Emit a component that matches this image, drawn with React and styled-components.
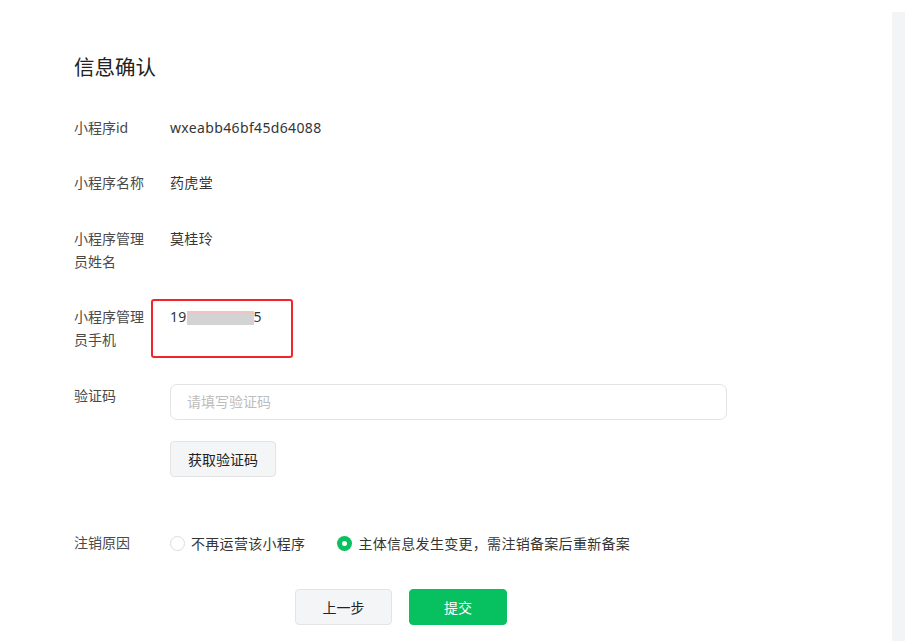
import React from "react";
import styled, { createGlobalStyle } from "styled-components";

const GlobalStyle = createGlobalStyle`
  html, body { margin: 0; padding: 0; background: #fff; }
  body {
    font-family: "Noto Sans", "Noto Sans CJK SC", sans-serif;
    -webkit-font-smoothing: antialiased;
  }
  * { box-sizing: border-box; }
`;

const Page = styled.div`
  display: flex;
  width: 905px;
  min-height: 641px;
  background: #fff;
`;

const Main = styled.main`
  flex: 1;
  padding: 53px 0 0 74px;
`;

const SideStrip = styled.aside`
  width: 13px;
  margin-top: 12px;
  background: #f3f4f6;
`;

const Title = styled.h2`
  margin: 0 0 34.5px;
  font-size: 20.5px;
  line-height: 28px;
  font-weight: 400;
  color: #222;
`;

const Form = styled.div`
  width: 653px;
  display: flex;
  flex-direction: column;
  gap: 32.5px;
`;

const Row = styled.div`
  display: grid;
  grid-template-columns: 72px 1fr;
  column-gap: 24px;
  align-items: start;
  margin-top: ${(p) => p.$extraTop || 0}px;
`;

const Label = styled.div`
  font-size: 14px;
  line-height: 23px;
  color: #4a4a4a;
`;

const Value = styled.div`
  position: relative;
  font-size: 14px;
  line-height: 23px;
  letter-spacing: 0.35px;
  color: #353535;
`;

const Masked = styled.span`
  display: inline-block;
  color: transparent;
  background: linear-gradient(#f0c4c4 0 3px, #d3d3d3 3px 100%);
  line-height: 14px;
  vertical-align: -1px;
  filter: blur(0.6px);
`;

const Highlight = styled.div`
  position: absolute;
  left: -19px;
  top: -6px;
  width: 142px;
  height: 59px;
  border: 2px solid #f1262c;
  border-radius: 3px;
  pointer-events: none;
`;

const Field = styled.div`
  display: flex;
  flex-direction: column;
  align-items: flex-start;
  gap: 21px;
`;

const Input = styled.input`
  width: 557px;
  height: 36px;
  padding: 0 16px;
  border: 1px solid #e3e3e3;
  border-radius: 7px;
  font-family: inherit;
  font-size: 14px;
  color: #353535;
  outline: none;
  &::placeholder { color: #bdbdbd; }
`;

const Button = styled.button`
  height: 36px;
  padding: 0 ${(p) => p.$pad || 16}px;
  width: ${(p) => (p.$w ? `${p.$w}px` : "auto")};
  border-radius: 4px;
  font-family: inherit;
  font-size: 14px;
  cursor: pointer;
  border: 1px solid ${(p) => (p.$primary ? "#07c160" : "#e4e4e4")};
  background: ${(p) => (p.$primary ? "#07c160" : "#f4f5f7")};
  color: ${(p) => (p.$primary ? "#fff" : "#222")};
`;

const Radios = styled.div`
  display: flex;
  align-items: center;
  gap: 32px;
  padding-top: 1px;
`;

const RadioItem = styled.label`
  display: flex;
  align-items: center;
  gap: 6px;
  font-size: 14px;
  line-height: 23px;
  letter-spacing: 0.3px;
  color: #353535;
`;

const RadioDot = styled.span`
  width: 15px;
  height: 15px;
  border-radius: 50%;
  flex: none;
  border: ${(p) => (p.$checked ? "none" : "1px solid #dcdcdc")};
  background: ${(p) => (p.$checked ? "#07c160" : "#fff")};
  display: flex;
  align-items: center;
  justify-content: center;
  &::after {
    content: "";
    display: ${(p) => (p.$checked ? "block" : "none")};
    width: 5px;
    height: 5px;
    border-radius: 50%;
    background: #fff;
  }
`;

const Actions = styled.div`
  display: flex;
  justify-content: center;
  gap: 17px;
  margin-top: 1px;
  padding-left: 1px;
`;

export default function App() {
  return (
    <>
      <GlobalStyle />
      <Page>
        <Main>
          <Title>信息确认</Title>
          <Form>
            <Row>
              <Label>小程序id</Label>
              <Value>wxeabb46bf45d64088</Value>
            </Row>
            <Row>
              <Label>小程序名称</Label>
              <Value>药虎堂</Value>
            </Row>
            <Row>
              <Label>小程序管理员姓名</Label>
              <Value>莫桂玲</Value>
            </Row>
            <Row>
              <Label>小程序管理员手机</Label>
              <Value>
                19<Masked>90000000</Masked>5
                <Highlight />
              </Value>
            </Row>
            <Row>
              <Label>验证码</Label>
              <Field>
                <Input placeholder="请填写验证码" />
                <Button $pad={17}>获取验证码</Button>
              </Field>
            </Row>
            <Row $extraTop={22}>
              <Label>注销原因</Label>
              <Radios>
                <RadioItem>
                  <RadioDot />
                  不再运营该小程序
                </RadioItem>
                <RadioItem>
                  <RadioDot $checked />
                  主体信息发生变更，需注销备案后重新备案
                </RadioItem>
              </Radios>
            </Row>
            <Actions>
              <Button $w={97}>上一步</Button>
              <Button $w={98} $primary>提交</Button>
            </Actions>
          </Form>
        </Main>
        <SideStrip />
      </Page>
    </>
  );
}
